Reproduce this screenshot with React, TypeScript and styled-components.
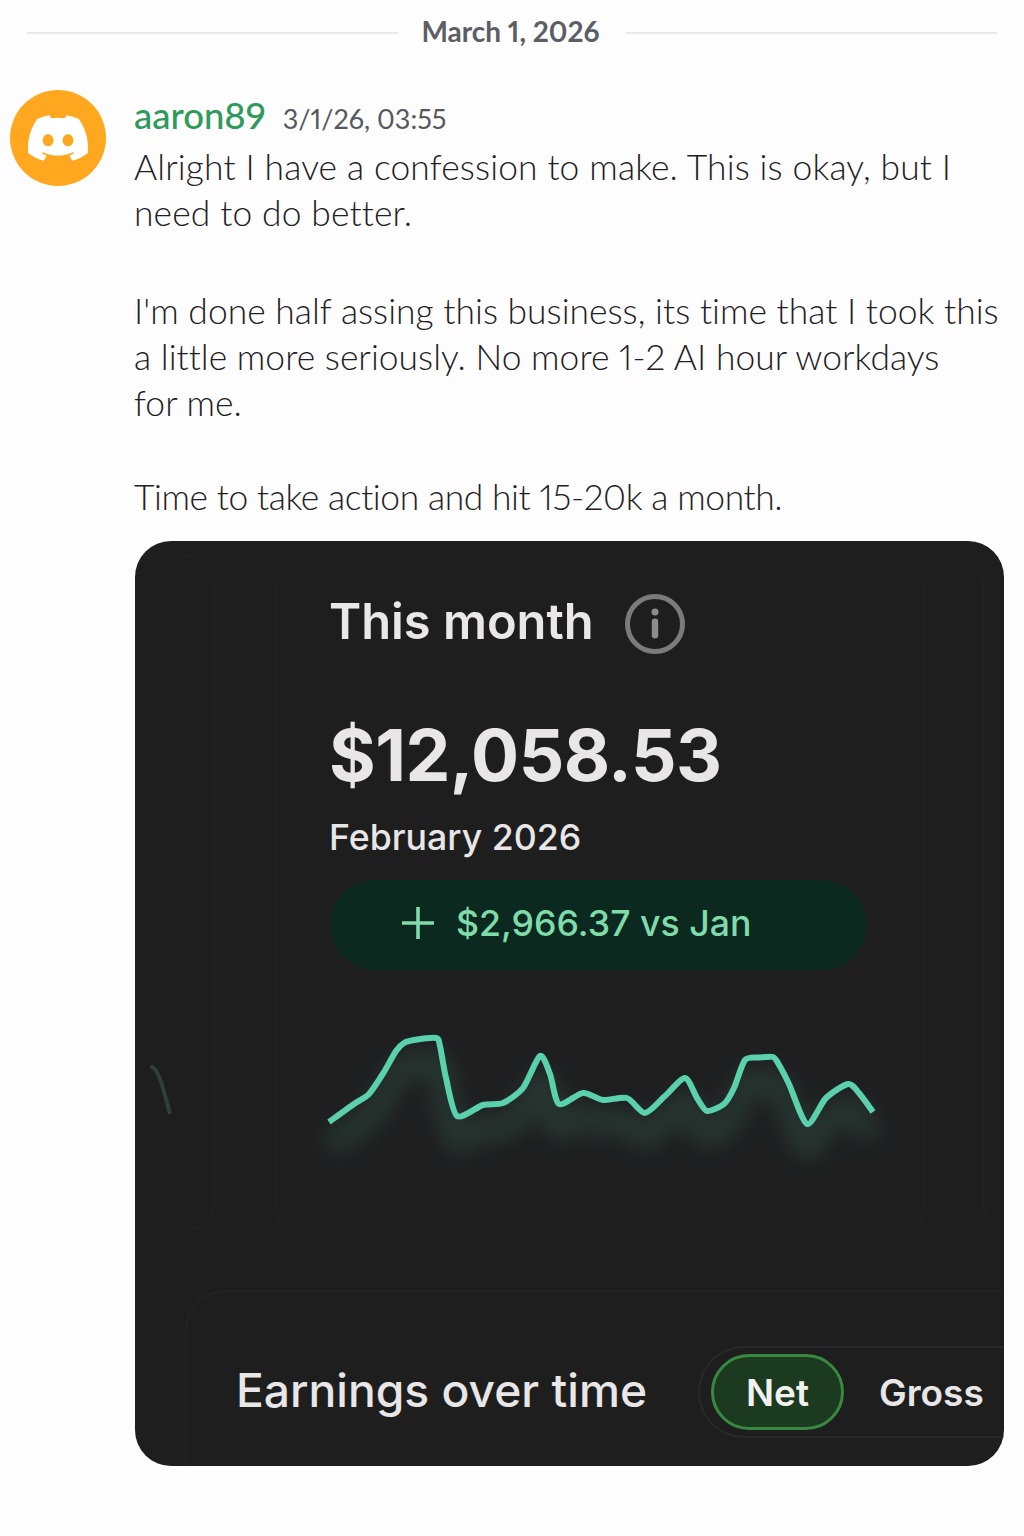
import React from 'react';
import styled, { createGlobalStyle } from 'styled-components';
import { SiDiscord } from 'react-icons/si';

const CHART_POINTS: [number, number][] = [
  [329, 1121], [354, 1103], [369, 1093], [384, 1071], [396, 1050], [404, 1042], [414, 1039], [436, 1037],
  [440, 1045], [446, 1077], [457, 1115], [483, 1104], [503, 1102], [523, 1087], [540, 1055], [550, 1073],
  [559, 1103], [583, 1092], [603, 1099], [627, 1097], [645, 1112], [665, 1095], [685, 1077],
  [697, 1097], [707, 1110], [724, 1103], [734, 1087], [745, 1059], [760, 1056.5], [773, 1056], [778, 1062], [789, 1083],
  [807, 1123], [826, 1097], [848, 1083], [859, 1092], [873, 1111],
];

// catmull-rom through the points so the line stays soft
const smoothPath = (pts: [number, number][]) => {
  let d = `M${pts[0][0]} ${pts[0][1]}`;
  for (let i = 0; i < pts.length - 1; i++) {
    const p0 = pts[Math.max(i - 1, 0)];
    const p1 = pts[i];
    const p2 = pts[i + 1];
    const p3 = pts[Math.min(i + 2, pts.length - 1)];
    const c1x = p1[0] + (p2[0] - p0[0]) / 8;
    const c1y = p1[1] + (p2[1] - p0[1]) / 8;
    const c2x = p2[0] - (p3[0] - p1[0]) / 8;
    const c2y = p2[1] - (p3[1] - p1[1]) / 8;
    d += ` C${c1x} ${c1y} ${c2x} ${c2y} ${p2[0]} ${p2[1]}`;
  }
  return d;
};

const App = () => {
  const linePath = smoothPath(CHART_POINTS);

  return (
    <Page>
      <GlobalStyle />
      <DateDivider>
        <DividerLine />
        <DateText>March 1, 2026</DateText>
        <DividerLine />
      </DateDivider>
      <Message>
        <Avatar>
          <SiDiscord size={60} color="#ffffff" />
        </Avatar>
        <MessageBody>
          <MessageHeader>
            <Username>aaron89</Username>
            <Timestamp>3/1/26, 03:55</Timestamp>
          </MessageHeader>
          <MessageText $gap={52} $tracking={0.14}>
            Alright I have a confession to make. This is okay, but I
            <br />
            need to do better.
          </MessageText>
          <MessageText $gap={48} $tracking={0.03}>
            I'm done half assing this business, its time that I took this
            <br />
            a little more seriously. No more 1-2 AI hour workdays
            <br />
            for me.
          </MessageText>
          <MessageText $gap={21} $tracking={-0.4}>
            Time to take action and hit 15-20k a month.
          </MessageText>
          <Attachment>
            <GhostPanel $side="left" />
            <GhostPanel $side="right" />
            <GhostArc viewBox="0 0 22 50" aria-hidden="true">
              <path d="M0 1 C8 3 12 18 20 49" fill="none" stroke="#2a4238" strokeWidth="4" />
            </GhostArc>
            <MonthPanel>
              <MonthHeader>
                <MonthTitle>This month</MonthTitle>
                <InfoIcon viewBox="0 0 60 60" aria-hidden="true">
                  <circle cx="30" cy="30" r="27.5" fill="none" stroke="#7b7b7b" strokeWidth="5" />
                  <circle cx="30" cy="18" r="3.5" fill="#8c8c8c" />
                  <rect x="26.8" y="24.5" width="6.4" height="20" rx="3.2" fill="#8c8c8c" />
                </InfoIcon>
              </MonthHeader>
              <Amount>$12,058.53</Amount>
              <Period>February 2026</Period>
              <DeltaPill>
                <PlusIcon viewBox="0 0 34 34" aria-hidden="true">
                  <path d="M17 1V33M1 17H33" stroke="#7fdcaa" strokeWidth="3.6" fill="none" />
                </PlusIcon>
                <DeltaText>$2,966.37 vs Jan</DeltaText>
              </DeltaPill>
              <Sparkline viewBox="310 1025 590 160" aria-hidden="true">
                <defs>
                  <filter id="glow" x="-10%" y="-60%" width="120%" height="220%">
                    <feGaussianBlur stdDeviation="11" />
                  </filter>
                </defs>
                <path
                  d={linePath}
                  transform="translate(0 24)"
                  fill="none"
                  stroke="#3f7a64"
                  strokeWidth="26"
                  opacity="0.26"
                  filter="url(#glow)"
                />
                <path d={linePath} fill="none" stroke="#5ad0ac" strokeWidth="6" strokeLinejoin="round" />
              </Sparkline>
            </MonthPanel>
            <EarningsPanel>
              <EarningsTitle>Earnings over time</EarningsTitle>
              <Toggle>
                <ToggleOption $active>Net</ToggleOption>
                <ToggleOption>Gross</ToggleOption>
              </Toggle>
            </EarningsPanel>
          </Attachment>
        </MessageBody>
      </Message>
    </Page>
  );
};

const GlobalStyle = createGlobalStyle`
  html, body {
    margin: 0;
    padding: 0;
    background: #fdfdfd;
  }
`;

const Page = styled.div`
  width: 1024px;
  height: 1536px;
  overflow: hidden;
  box-sizing: border-box;
  padding-top: 13px;
  font-family: 'Lato', 'Liberation Sans', sans-serif;
  font-variant-ligatures: none;
  font-variant-numeric: proportional-nums;
`;

const DateDivider = styled.div`
  display: flex;
  align-items: center;
  gap: 23px;
  padding: 0 27px;
  height: 38px;
`;

const DividerLine = styled.div`
  flex: 1;
  height: 2px;
  margin-top: 2px;
  background: #e8e9ea;
`;

const DateText = styled.span`
  font-size: 28px;
  font-weight: 700;
  color: #5c5e66;
  white-space: nowrap;
  margin: -2px 3px 0 0;
`;

const Message = styled.div`
  display: flex;
  align-items: flex-start;
  gap: 28px;
  margin-top: 39px;
  padding-left: 10px;
`;

const Avatar = styled.div`
  flex: none;
  width: 96px;
  height: 96px;
  border-radius: 50%;
  background: #ffa81f;
  display: flex;
  align-items: center;
  justify-content: center;
`;

const MessageBody = styled.div`
  flex: 1;
  min-width: 0;
`;

const MessageHeader = styled.div`
  display: flex;
  align-items: baseline;
  gap: 17px;
  height: 56px;
  margin-top: -2px;
`;

const Username = styled.span`
  font-size: 36.5px;
  font-weight: 500;
  color: #2e9a5b;
  line-height: 54px;
`;

const Timestamp = styled.span`
  font-size: 27px;
  color: #56585f;
`;

const MessageText = styled.p<{ $gap: number; $tracking: number }>`
  margin: 0 0 ${(p) => p.$gap}px;
  font-size: 35.4px;
  line-height: 46px;
  font-weight: 300;
  letter-spacing: ${(p) => p.$tracking}px;
  color: #1f2024;
  white-space: nowrap;
`;

const Attachment = styled.div`
  position: relative;
  width: 869px;
  height: 925px;
  margin-left: 1px;
  border-radius: 36px;
  background: #1e1e1f;
  overflow: hidden;
  font-family: 'Inter', 'Liberation Sans', sans-serif;
`;

const GhostPanel = styled.div<{ $side: 'left' | 'right' }>`
  position: absolute;
  top: 14px;
  height: 672px;
  width: 78px;
  border: 2px solid rgba(255, 255, 255, 0.016);
  ${(p) =>
    p.$side === 'left'
      ? 'left: 0; border-left: none; border-radius: 0 30px 30px 0;'
      : 'right: -60px; border-radius: 30px 0 0 30px;'}
`;

const GhostArc = styled.svg`
  position: absolute;
  left: 15px;
  top: 524px;
  width: 22px;
  height: 50px;
`;

const MonthPanel = styled.section`
  position: relative;
  width: 652px;
  height: 680px;
  box-sizing: border-box;
  margin: 14px 0 0 139px;
  padding: 29px 0 0 53px;
  border: 2px solid rgba(255, 255, 255, 0.016);
  border-radius: 30px;
`;

const MonthHeader = styled.div`
  display: flex;
  align-items: center;
  gap: 31px;
  height: 70px;
`;

const MonthTitle = styled.h2`
  margin: 0;
  font-size: 48.8px;
  font-weight: 600;
  color: #e9e7e8;
`;

const InfoIcon = styled.svg`
  width: 60px;
  height: 60px;
  margin-top: 6px;
`;

const Amount = styled.div`
  margin-top: 57px;
  font-size: 71.3px;
  line-height: 84px;
  font-weight: 700;
  color: #e8e6e7;
  letter-spacing: -0.5px;
`;

const Period = styled.div`
  margin-top: 18px;
  font-size: 35.7px;
  line-height: 44px;
  font-weight: 500;
  color: #e8e6e7;
`;

const DeltaPill = styled.div`
  display: flex;
  align-items: center;
  gap: 21px;
  width: 537px;
  height: 90px;
  box-sizing: border-box;
  margin: 21px 0 0 1px;
  padding: 0 0 4px 71px;
  border-radius: 45px;
  background: #0c2920;
`;

const PlusIcon = styled.svg`
  width: 34px;
  height: 34px;
`;

const DeltaText = styled.span`
  font-size: 35.7px;
  font-weight: 500;
  color: #7fdcaa;
`;

const Sparkline = styled.svg`
  display: block;
  width: 590px;
  height: 160px;
  margin: 56px 0 0 -19px;
`;

const EarningsPanel = styled.section`
  display: flex;
  align-items: center;
  justify-content: space-between;
  height: 176px;
  box-sizing: border-box;
  margin: 55px -2px 0 50px;
  padding: 24px 0 0 49px;
  border: 2px solid rgba(255, 255, 255, 0.018);
  border-right: none;
  border-bottom: none;
  border-radius: 40px 0 0 0;
`;

const EarningsTitle = styled.h3`
  margin: 0;
  font-size: 46.2px;
  font-weight: 500;
  color: #e8e6e7;
  white-space: nowrap;
  transform: translateY(-1px);
`;

const Toggle = styled.div`
  display: flex;
  align-items: center;
  gap: 35px;
  width: 308px;
  height: 92px;
  flex: none;
  box-sizing: border-box;
  padding-left: 11px;
  border: 2px solid #28292a;
  border-right: none;
  border-radius: 46px 0 0 46px;
  margin-top: 2px;
`;

const ToggleOption = styled.span<{ $active?: boolean }>`
  font-size: 37px;
  font-weight: 600;
  color: #e8e6e7;
  ${(p) =>
    p.$active &&
    `
    display: flex;
    align-items: center;
    justify-content: center;
    width: 133px;
    height: 76px;
    box-sizing: border-box;
    border-radius: 38px;
    border: 3px solid #37893f;
    background: #1c3a20;
    color: #f1f1ef;
  `}
`;

export default App;
